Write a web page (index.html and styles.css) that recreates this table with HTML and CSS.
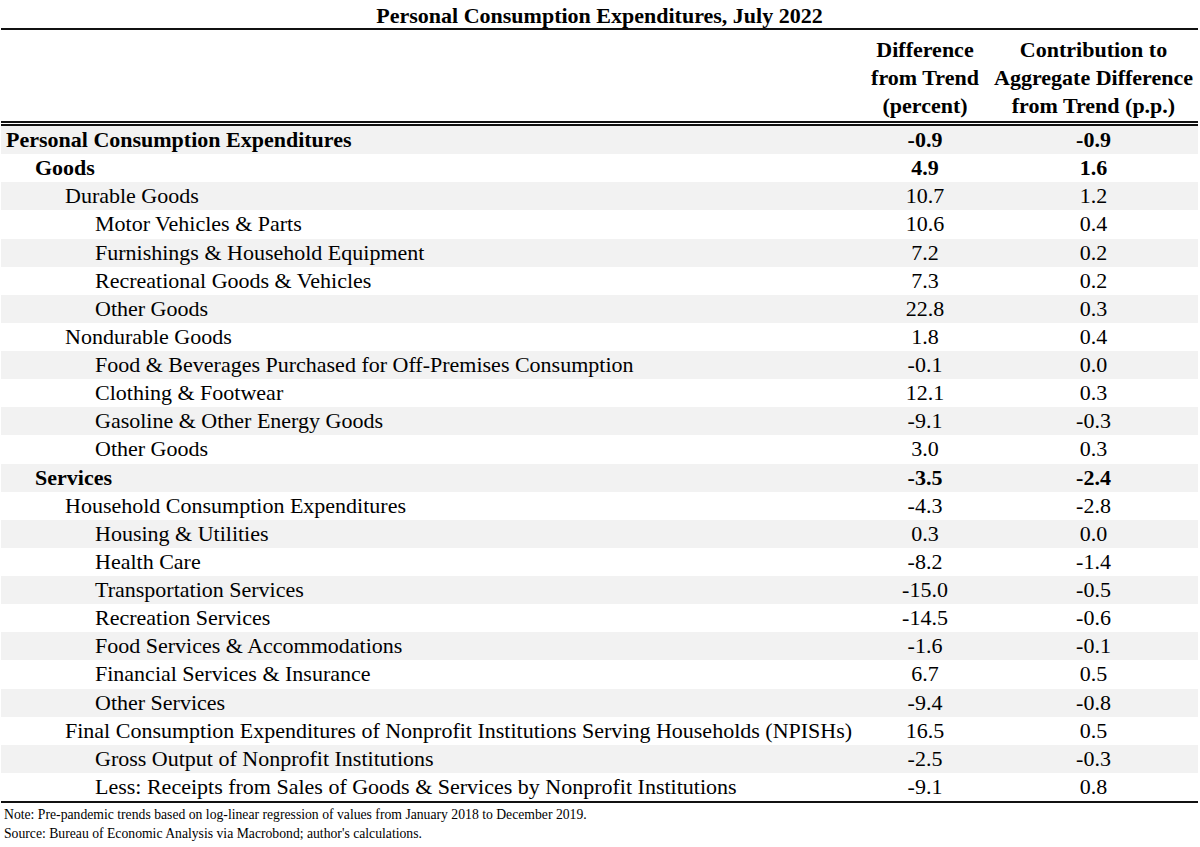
FILE: index.html
```html
<!DOCTYPE html>
<html>
<head>
<meta charset="utf-8">
<link rel="stylesheet" href="styles.css">
</head>
<body>
<div class="wrap">
  <div class="title">Personal Consumption Expenditures, July 2022</div>
  <table class="pce">
    <colgroup>
      <col class="c-label">
      <col class="c-diff">
      <col class="c-contrib">
    </colgroup>
    <thead>
      <tr>
        <th class="h-label"></th>
        <th class="h-num">Difference<br>from Trend<br>(percent)</th>
        <th class="h-num">Contribution to<br>Aggregate Difference<br>from Trend (p.p.)</th>
      </tr>
    </thead>
    <tbody>
      <tr class="b l0"><td>Personal Consumption Expenditures</td><td>-0.9</td><td>-0.9</td></tr>
      <tr class="b l1"><td>Goods</td><td>4.9</td><td>1.6</td></tr>
      <tr class="l2"><td>Durable Goods</td><td>10.7</td><td>1.2</td></tr>
      <tr class="l3"><td>Motor Vehicles &amp; Parts</td><td>10.6</td><td>0.4</td></tr>
      <tr class="l3"><td>Furnishings &amp; Household Equipment</td><td>7.2</td><td>0.2</td></tr>
      <tr class="l3"><td>Recreational Goods &amp; Vehicles</td><td>7.3</td><td>0.2</td></tr>
      <tr class="l3"><td>Other Goods</td><td>22.8</td><td>0.3</td></tr>
      <tr class="l2"><td>Nondurable Goods</td><td>1.8</td><td>0.4</td></tr>
      <tr class="l3"><td>Food &amp; Beverages Purchased for Off-Premises Consumption</td><td>-0.1</td><td>0.0</td></tr>
      <tr class="l3"><td>Clothing &amp; Footwear</td><td>12.1</td><td>0.3</td></tr>
      <tr class="l3"><td>Gasoline &amp; Other Energy Goods</td><td>-9.1</td><td>-0.3</td></tr>
      <tr class="l3"><td>Other Goods</td><td>3.0</td><td>0.3</td></tr>
      <tr class="b l1"><td>Services</td><td>-3.5</td><td>-2.4</td></tr>
      <tr class="l2"><td>Household Consumption Expenditures</td><td>-4.3</td><td>-2.8</td></tr>
      <tr class="l3"><td>Housing &amp; Utilities</td><td>0.3</td><td>0.0</td></tr>
      <tr class="l3"><td>Health Care</td><td>-8.2</td><td>-1.4</td></tr>
      <tr class="l3"><td>Transportation Services</td><td>-15.0</td><td>-0.5</td></tr>
      <tr class="l3"><td>Recreation Services</td><td>-14.5</td><td>-0.6</td></tr>
      <tr class="l3"><td>Food Services &amp; Accommodations</td><td>-1.6</td><td>-0.1</td></tr>
      <tr class="l3"><td>Financial Services &amp; Insurance</td><td>6.7</td><td>0.5</td></tr>
      <tr class="l3"><td>Other Services</td><td>-9.4</td><td>-0.8</td></tr>
      <tr class="l2"><td>Final Consumption Expenditures of Nonprofit Institutions Serving Households (NPISHs)</td><td>16.5</td><td>0.5</td></tr>
      <tr class="l3"><td>Gross Output of Nonprofit Institutions</td><td>-2.5</td><td>-0.3</td></tr>
      <tr class="l3"><td>Less: Receipts from Sales of Goods &amp; Services by Nonprofit Institutions</td><td>-9.1</td><td>0.8</td></tr>
    </tbody>
  </table>
  <div class="notes">
    <p>Note: Pre-pandemic trends based on log-linear regression of values from January 2018 to December 2019.</p>
    <p>Source: Bureau of Economic Analysis via Macrobond; author's calculations.</p>
  </div>
</div>
</body>
</html>
```
FILE: styles.css
```css
html, body {
  margin: 0;
  padding: 0;
  background: #ffffff;
}
body {
  font-family: "Liberation Serif", "Times New Roman", serif;
  color: #000;
}
.wrap {
  width: 1197px;
  margin-left: 1px;
}
.title {
  height: 28px;
  line-height: 32px;
  font-size: 22px;
  font-weight: bold;
  text-align: center;
  border-bottom: 2px solid #111;
  box-sizing: content-box;
}
.pce {
  width: 100%;
  border-collapse: collapse;
  table-layout: fixed;
  font-size: 22px;
}
.c-label { width: 860px; }
.c-diff { width: 128px; }
.c-contrib { width: 209px; }
.pce thead th {
  font-weight: bold;
  line-height: 28px;
  padding: 6px 0 1px 0;
  text-align: center;
  vertical-align: top;
  border-bottom: 5px double #111;
}
.pce tbody tr {
  height: 28.13px;
}
.pce tbody td {
  height: 28.13px;
  line-height: 28px;
  padding: 0;
  white-space: nowrap;
  text-align: center;
  vertical-align: middle;
}
.pce tbody td:first-child {
  text-align: left;
}
.pce tbody tr:nth-child(odd) td {
  background: #f2f2f2;
}
.pce tbody tr:last-child td {
  border-bottom: 2px solid #111;
}
.b td { font-weight: bold; }
.l0 td:first-child { padding-left: 5px; }
.l1 td:first-child { padding-left: 34px; }
.l2 td:first-child { padding-left: 64px; }
.l3 td:first-child { padding-left: 94px; }
.notes {
  font-size: 13.7px;
  padding-top: 2px;
  padding-left: 3px;
}
.notes p {
  margin: 0;
  line-height: 19px;
}
```
